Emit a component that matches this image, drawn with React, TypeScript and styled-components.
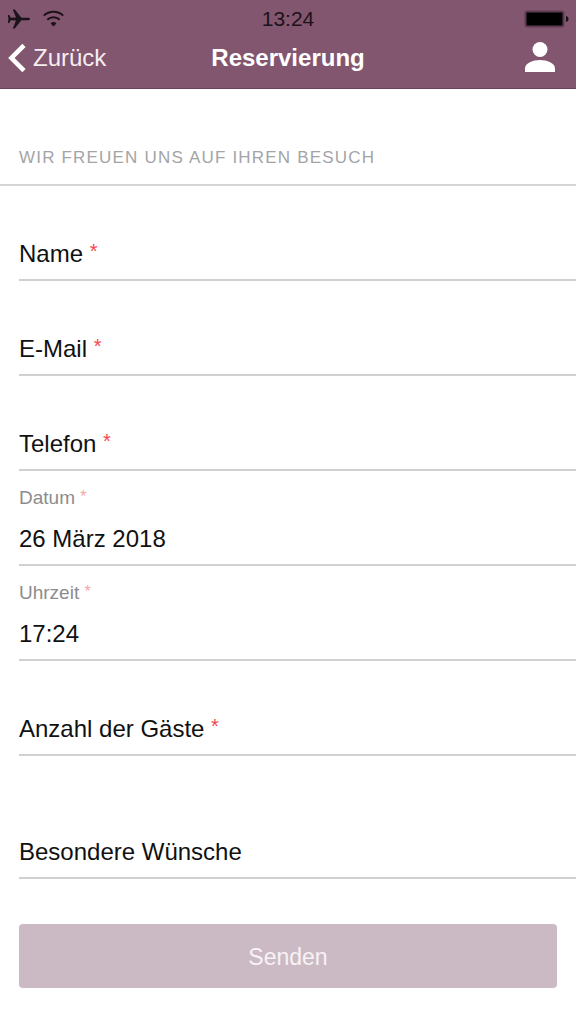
import React, { useId, useState } from 'react';
import styled, { createGlobalStyle, css } from 'styled-components';

const GlobalStyle = createGlobalStyle`
  *, *::before, *::after { box-sizing: border-box; }
  body {
    margin: 0;
    background: #ffffff;
    color: #111111;
    font-family: "Liberation Sans", Helvetica, Arial, sans-serif;
    font-size: 24px;
    line-height: 28px;
  }
`;

const Header = styled.header`
  background: #82566f;
  border-bottom: 1px solid #68445a;
  padding-bottom: 10px;
`;

const StatusBar = styled.div`
  display: grid;
  grid-template-columns: 1fr auto 1fr;
  align-items: center;
  height: 37px;
  padding: 0 7px;
  color: #1c1219;
  font-size: 21px;
`;

const StatusGroup = styled.div<{ $end?: boolean }>`
  display: flex;
  align-items: center;
  justify-content: ${(p) => (p.$end ? 'flex-end' : 'flex-start')};
  gap: 13px;
`;

const NavBar = styled.nav`
  display: grid;
  grid-template-columns: 1fr auto 1fr;
  align-items: center;
  height: 41px;
  padding: 0 8px;
`;

const NavButton = styled.button<{ $end?: boolean }>`
  display: flex;
  align-items: center;
  justify-self: ${(p) => (p.$end ? 'end' : 'start')};
  gap: 7px;
  padding: ${(p) => (p.$end ? '0 12px 2px 0' : '0')};
  border: 0;
  background: none;
  color: #f6edf2;
  font: inherit;
  cursor: pointer;
`;

const Title = styled.h1`
  margin: 0;
  color: #ffffff;
  font-size: 24px;
  font-weight: 700;
`;

const SectionTitle = styled.h2`
  margin: 0;
  padding: 55px 19px 12px;
  border-bottom: 2px solid #d6d6d8;
  color: #a4a4a6;
  font-size: 17px;
  font-weight: 400;
  letter-spacing: 0.07em;
  text-transform: uppercase;
`;

const Form = styled.form`
  display: flex;
  flex-direction: column;
  padding-left: 19px;
`;

const Row = styled.div<{ $tall?: boolean }>`
  display: grid;
  grid-template-rows: ${(p) => (p.$tall ? '71px' : '43px')} 50px;
  border-bottom: 2px solid #d0d0d2;
`;

const Label = styled.label<{ $floating: boolean }>`
  grid-column: 1;
  pointer-events: none;
  z-index: 1;
  ${(p) =>
    p.$floating
      ? css`
          grid-row: 1;
          align-self: end;
          padding-bottom: 2px;
          color: #8c8c8e;
          font-size: 19px;
        `
      : css`
          grid-row: 2;
          padding-top: 11px;
        `}
`;

const Required = styled.span<{ $faded: boolean }>`
  color: ${(p) => (p.$faded ? '#f9a3a5' : '#f4474b')};
  font-size: ${(p) => (p.$faded ? '16px' : '20px')};
  line-height: 1;
  vertical-align: ${(p) => (p.$faded ? '2px' : '4px')};
`;

const controlStyle = css`
  grid-row: 2;
  grid-column: 1;
  width: 100%;
  height: 50px;
  margin: 0;
  padding: 11px 19px 11px 0;
  border: 0;
  outline: 0;
  background: transparent;
  color: inherit;
  font: inherit;
`;

const Input = styled.input`
  ${controlStyle}
`;

const TextArea = styled.textarea`
  ${controlStyle}
  resize: none;
`;

const Submit = styled.button`
  height: 64px;
  margin: 45px 19px 36px 0;
  padding: 2px 0 0;
  border: 0;
  border-radius: 4px;
  background: #cbbac4;
  color: #f8f2f6;
  font: inherit;
  font-size: 23px;
`;

type FieldProps = {
  label: string;
  type?: string;
  initial?: string;
  required?: boolean;
  multiline?: boolean;
};

function Field({ label, type = 'text', initial = '', required, multiline }: FieldProps) {
  const id = useId();
  const [value, setValue] = useState(initial);
  const [focused, setFocused] = useState(false);
  const floating = focused || value !== '';
  const shared = {
    id,
    value,
    required,
    onFocus: () => setFocused(true),
    onBlur: () => setFocused(false),
  };

  return (
    <Row $tall={multiline}>
      <Label htmlFor={id} $floating={floating}>
        {label}
        {required && <> <Required $faded={floating}>*</Required></>}
      </Label>
      {multiline ? (
        <TextArea {...shared} rows={1} onChange={(e) => setValue(e.target.value)} />
      ) : (
        <Input {...shared} type={type} onChange={(e) => setValue(e.target.value)} />
      )}
    </Row>
  );
}

const AirplaneIcon = () => (
  <svg width="23" height="20" viewBox="0 0 23 20" fill="currentColor" aria-hidden="true">
    <path d="M23 10c0-.9-1-1.300-2.400-1.300h-6.200L7.800.5H5.800l3.200 8.100-5.200.2L2.200 6H.8L1.500 10l-.7 4h1.400l1.600-2.800 5.200.2L5.800 19.500h2l6.600-8.200h6.200c1.400 0 2.400-.4 2.400-1.300z" />
  </svg>
);

const WifiIcon = () => (
  <svg width="21" height="17" viewBox="0 0 21 17" fill="none" stroke="currentColor" strokeWidth="2" aria-hidden="true">
    <path d="M.8 5.600a14 14 0 0 1 19.400 0" />
    <path d="M4.300 9.800a9 9 0 0 1 12.400 0" />
    <path d="M7.600 13.400a3.600 3.600 0 0 1 5.800 0L10.500 16.600z" fill="currentColor" stroke="none" />
  </svg>
);

const BatteryIcon = () => (
  <svg width="45" height="18" viewBox="0 0 45 18" aria-hidden="true">
    <rect x=".5" y=".5" width="40" height="17" rx="3" fill="#5e3a50" />
    <rect x="2.500" y="2.500" width="36" height="13" rx="1" fill="#000" />
    <path d="M42 6c2 .5 2.500 1.500 2.500 3s-.5 2.500-2.500 3z" fill="#1c1219" />
  </svg>
);

const BackIcon = () => (
  <svg width="18" height="30" viewBox="0 0 18 30" fill="none" stroke="#fff" strokeWidth="4.600" aria-hidden="true">
    <path d="M16 2.300 3.400 15 16 27.700" />
  </svg>
);

const PersonIcon = () => (
  <svg width="31" height="30" viewBox="0 0 31 30" fill="#fff" aria-hidden="true">
    <circle cx="15" cy="7.500" r="7.500" />
    <path d="M0 30v-3.500c0-5.500 8-8.500 15-8.500s15 3 15 8.500V30z" />
  </svg>
);

export default function App() {
  return (
    <>
      <GlobalStyle />
      <Header>
        <StatusBar>
          <StatusGroup>
            <AirplaneIcon />
            <WifiIcon />
          </StatusGroup>
          <time>13:24</time>
          <StatusGroup $end>
            <BatteryIcon />
          </StatusGroup>
        </StatusBar>
        <NavBar>
          <NavButton type="button">
            <BackIcon />
            Zurück
          </NavButton>
          <Title>Reservierung</Title>
          <NavButton type="button" $end aria-label="Profil">
            <PersonIcon />
          </NavButton>
        </NavBar>
      </Header>
      <main>
        <SectionTitle>Wir freuen uns auf Ihren Besuch</SectionTitle>
        <Form onSubmit={(e) => e.preventDefault()}>
          <Field label="Name" required />
          <Field label="E-Mail" type="email" required />
          <Field label="Telefon" type="tel" required />
          <Field label="Datum" initial="26 März 2018" required />
          <Field label="Uhrzeit" initial="17:24" required />
          <Field label="Anzahl der Gäste" required />
          <Field label="Besondere Wünsche" multiline />
          <Submit type="submit">Senden</Submit>
        </Form>
      </main>
    </>
  );
}
